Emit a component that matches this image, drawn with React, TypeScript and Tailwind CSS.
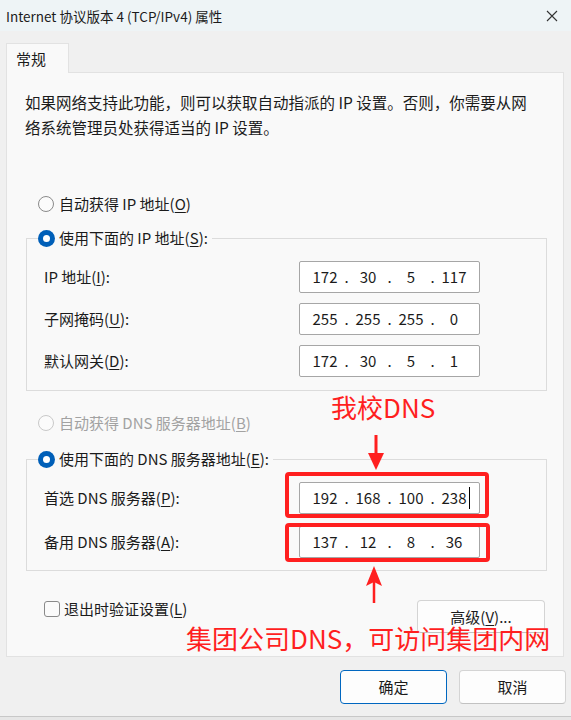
import React from "react";

const FONT = "font-['Noto_Sans_CJK_SC','Noto_Sans',sans-serif]";

function Radio({ checked, disabled }: { checked?: boolean; disabled?: boolean }) {
  if (checked) {
    return (
      <span className="w-[17px] h-[17px] rounded-full bg-[#005fb8] flex items-center justify-center shrink-0">
        <span className="w-[7px] h-[7px] rounded-full bg-white" />
      </span>
    );
  }
  return (
    <span
      className={
        "w-[16px] h-[16px] rounded-full border bg-[#fbfbfb] shrink-0 " +
        (disabled ? "border-[#c9c9c9]" : "border-[#8a8a8a]")
      }
    />
  );
}

function IpBox({ parts, cursor }: { parts: string[]; cursor?: boolean }) {
  return (
    <div className="relative w-[181px] h-[32px] bg-white border border-[#a6a6a6] rounded-[2px] flex items-center pl-[7px] text-[15px] text-[#1b1b1b]">
      {parts.map((p, i) => (
        <React.Fragment key={i}>
          <span className="w-[36px] text-center leading-[20px]">{p}</span>
          {i < 3 && <span className="w-[7px] text-center leading-[20px]">.</span>}
        </React.Fragment>
      ))}
      {cursor && <span className="absolute left-[169px] top-[4px] w-px h-[22px] bg-black" />}
    </div>
  );
}

function Row({ label, mn, parts, cursor }: { label: string; mn: string; parts: string[]; cursor?: boolean }) {
  return (
    <div className="grid grid-cols-[255px_181px] items-center">
      <span className="text-[15px] text-[#1b1b1b] leading-[20px] whitespace-nowrap">
        {label}(<u className="underline-offset-2">{mn}</u>):
      </span>
      <IpBox parts={parts} cursor={cursor} />
    </div>
  );
}

export default function App() {
  return (
    <div className={"relative w-[571px] h-[720px] bg-[#f0f0f0] overflow-hidden " + FONT}>
      {/* title bar */}
      <div className="h-[31px] bg-[#eef4f6] flex items-center justify-between pl-[6px] pr-[13px]">
        <span className="text-[13.5px] text-[#1b1b1b] leading-[20px]">Internet 协议版本 4 (TCP/IPv4) 属性</span>
        <svg width="12" height="12" viewBox="0 0 12 12" className="mt-[1px]">
          <path d="M1 1L11 11M11 1L1 11" stroke="#333" strokeWidth="1.1" fill="none" />
        </svg>
      </div>

      <div className="px-[6px] pt-[12px]">
        {/* tab */}
        <div className="relative z-10 w-[63px] h-[30px] bg-[#f9f9f9] border border-b-0 border-[#e2e2e2] flex items-center pl-[9px]">
          <span className="text-[15px] text-[#1b1b1b] leading-[20px]">常规</span>
        </div>
        {/* panel */}
        <div className="-mt-px h-[585px] w-[558px] bg-[#f9f9f9] border border-[#e2e2e2] pl-[19px] pr-[16px] pt-[17px] flex flex-col">
          <p className="text-[15.5px] leading-[25px] text-[#1b1b1b] whitespace-nowrap -ml-px">
            如果网络支持此功能，则可以获取自动指派的 IP 设置。否则，你需要从网
            <br />
            络系统管理员处获得适当的 IP 设置。
          </p>

          <div className="mt-[52px] h-[24px] flex items-center gap-[5px] pl-[12px]">
            <Radio />
            <span className="text-[15px] text-[#1b1b1b] leading-[20px]">
              自动获得 IP 地址(<u className="underline-offset-2">O</u>)
            </span>
          </div>

          <fieldset className="mt-[10px] border border-[#dcdcdc] w-[521px]">
            <legend className="ml-[11px] pr-[4px] h-[24px] flex items-center gap-[4px]">
              <Radio checked />
              <span className="text-[15px] text-[#1b1b1b] leading-[20px]">
                使用下面的 IP 地址(<u className="underline-offset-2">S</u>):
              </span>
            </legend>
            <div className="pl-[17px] pt-[11px] pb-[13px] flex flex-col gap-[10px]">
              <Row label="IP 地址" mn="I" parts={["172", "30", "5", "117"]} />
              <Row label="子网掩码" mn="U" parts={["255", "255", "255", "0"]} />
              <Row label="默认网关" mn="D" parts={["172", "30", "5", "1"]} />
            </div>
          </fieldset>

          <div className="mt-[20px] h-[24px] flex items-center gap-[5px] pl-[12px]">
            <Radio disabled />
            <span className="text-[15px] text-[#a2a2a2] leading-[20px]">
              自动获得 DNS 服务器地址(<u className="underline-offset-2">B</u>)
            </span>
          </div>

          <fieldset className="mt-[12px] border border-[#dcdcdc] w-[521px]">
            <legend className="ml-[11px] pr-[4px] h-[24px] flex items-center gap-[4px]">
              <Radio checked />
              <span className="text-[15px] text-[#1b1b1b] leading-[20px]">
                使用下面的 DNS 服务器地址(<u className="underline-offset-2">E</u>):
              </span>
            </legend>
            <div className="pl-[17px] pt-[11px] pb-[12px] flex flex-col gap-[12px]">
              <Row label="首选 DNS 服务器" mn="P" parts={["192", "168", "100", "238"]} cursor />
              <Row label="备用 DNS 服务器" mn="A" parts={["137", "12", "8", "36"]} />
            </div>
          </fieldset>

          <div className="mt-[26px] flex items-start justify-between w-[519px]">
            <div className="h-[24px] flex items-center gap-[4px] pl-[18px]">
              <span className="w-[16px] h-[16px] rounded-[3px] border border-[#8a8a8a] bg-[#fbfbfb]" />
              <span className="text-[15px] text-[#1b1b1b] leading-[20px]">
                退出时验证设置(<u className="underline-offset-2">L</u>)
              </span>
            </div>
            <button className="mt-[3px] w-[128px] h-[33px] rounded-[4px] border border-[#d4d4d4] border-b-[#c2c2c2] bg-[#fdfdfd] text-[15px] text-[#1b1b1b] leading-[20px]">
              高级(<u className="underline-offset-2">V</u>)...
            </button>
          </div>
        </div>

        {/* dialog buttons */}
        <div className="mt-[13px] flex justify-end gap-[12px] mr-[-1px]">
          <button className="w-[107px] h-[34px] rounded-[4px] border border-[#0067c0] bg-[#fdfdfd] text-[15px] text-[#1b1b1b] leading-[20px]">
            确定
          </button>
          <button className="w-[107px] h-[34px] rounded-[4px] border border-[#d4d4d4] border-b-[#c2c2c2] bg-[#fdfdfd] text-[15px] text-[#1b1b1b] leading-[20px]">
            取消
          </button>
        </div>
      </div>

      <div className="absolute left-0 right-0 top-[716px] h-px bg-[#c8c8c8]" />
      <div className="absolute left-0 right-0 top-[717px] h-[3px] bg-[#e6e6e6]" />

      {/* annotations */}
      <span className="absolute left-[331px] top-[391px] text-[26px] leading-[32px] text-[#ff1f1f] whitespace-nowrap">
        我校DNS
      </span>
      <svg className="absolute left-[366px] top-[433px]" width="22" height="40" viewBox="0 0 22 40">
        <path d="M10 2V24" stroke="#ff1f1f" strokeWidth="3" />
        <path d="M2 20L18 20L10 37Z" fill="#ff1f1f" />
      </svg>
      <div className="absolute left-[285px] top-[472px] w-[204px] h-[46px] border-[4px] border-[#ff1f1f] rounded-[4px]" />
      <div className="absolute left-[285px] top-[523px] w-[205px] h-[39px] border-[4px] border-[#ff1f1f] rounded-[4px]" />
      <svg className="absolute left-[364px] top-[565px]" width="20" height="40" viewBox="0 0 20 40">
        <path d="M10 14V38" stroke="#ff1f1f" strokeWidth="2.5" />
        <path d="M10 1L2 21L10 17L18 21Z" fill="#ff1f1f" />
      </svg>
      <span className="absolute left-[186px] top-[621px] text-[26px] leading-[34px] text-[#ff1f1f] whitespace-nowrap">
        集团公司DNS，可访问集团内网
      </span>
    </div>
  );
}
